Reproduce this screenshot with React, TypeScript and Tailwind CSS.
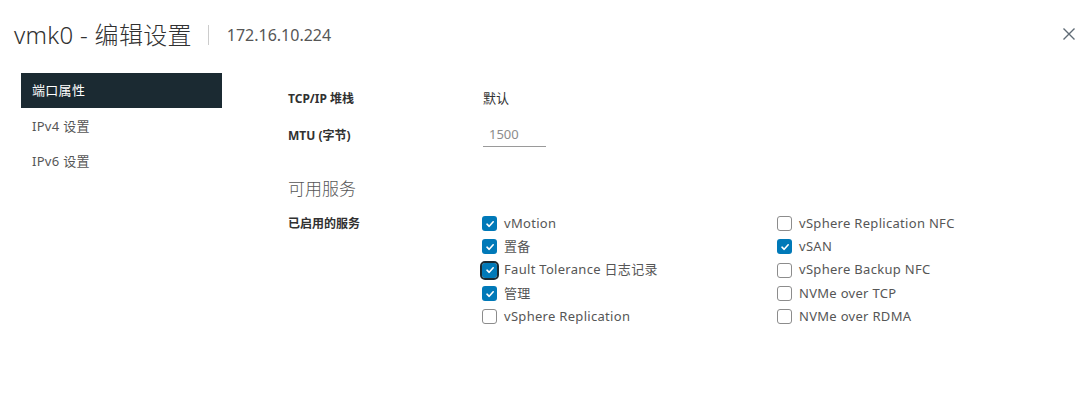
import React from 'react';

type Service = { label: string; checked: boolean; focused?: boolean };

const left: Service[] = [
  { label: 'vMotion', checked: true },
  { label: '置备', checked: true },
  { label: 'Fault Tolerance 日志记录', checked: true, focused: true },
  { label: '管理', checked: true },
  { label: 'vSphere Replication', checked: false },
];

const right: Service[] = [
  { label: 'vSphere Replication NFC', checked: false },
  { label: 'vSAN', checked: true },
  { label: 'vSphere Backup NFC', checked: false },
  { label: 'NVMe over TCP', checked: false },
  { label: 'NVMe over RDMA', checked: false },
];

function Check({ s }: { s: Service }) {
  return (
    <div className="flex items-center h-[23.3px] gap-[7px]">
      <span
        className={
          'relative flex items-center justify-center w-[15px] h-[15px] rounded-[3px] ' +
          (s.checked ? 'bg-[#0079b8] ' : 'bg-white border border-[#8c8c8c] ') +
          (s.focused ? 'outline outline-2 outline-[#1b2a32] outline-offset-[0px]' : '')
        }
      >
        {s.checked && (
          <svg width="10" height="10" viewBox="0 0 10 10" fill="none">
            <path d="M2 5.2 L4.2 7.3 L8.2 2.8" stroke="white" strokeWidth="1.6" strokeLinecap="round" strokeLinejoin="round" />
          </svg>
        )}
      </span>
      <span className="text-[13px] text-[#565656] tracking-[0.3px]">{s.label}</span>
    </div>
  );
}

export default function App() {
  return (
    <div
      className="w-[1080px] h-[406px] bg-white overflow-hidden relative"
      style={{ fontFamily: '"Noto Sans", "Noto Sans CJK SC", sans-serif' }}
    >
      {/* header */}
      <div className="flex items-center h-[50px] pt-[20px] pl-[14px]">
        <h1 className="text-[24px] text-[#313131] font-light leading-none tracking-[0.3px]">vmk0 - 编辑设置</h1>
        <div className="w-px h-[20px] bg-[#cccccc] ml-[16px] mr-[18px]" />
        <span className="text-[16px] text-[#565656] leading-none">172.16.10.224</span>
      </div>
      <button className="absolute right-[1px] top-[24px] w-[20px] h-[20px] flex items-center justify-center text-[#5f6b75]">
        <svg width="14" height="14" viewBox="0 0 14 14" fill="none">
          <path d="M1.5 1.5 L12.5 12.5 M12.5 1.5 L1.5 12.5" stroke="currentColor" strokeWidth="1.4" />
        </svg>
      </button>

      <div className="flex mt-[23px]">
        {/* sidebar */}
        <nav className="w-[201px] ml-[21px] flex flex-col">
          <div className="h-[35px] bg-[#1b2a32] text-white text-[13px] flex items-center pl-[11px] pt-[1px] tracking-[0.3px]">端口属性</div>
          <div className="h-[35px] mt-[1px] text-[#565656] text-[13px] flex items-center pl-[11px] pt-[1px] tracking-[0.3px]">IPv4 设置</div>
          <div className="h-[35px] text-[#565656] text-[13px] flex items-center pl-[11px] pt-[1px] tracking-[0.3px]">IPv6 设置</div>
        </nav>

        {/* content */}
        <div className="ml-[66px] flex flex-col pt-[17px]">
          <div className="flex items-center h-[18px]">
            <span className="w-[195px] text-[12px] font-bold text-[#313131]">TCP/IP 堆栈</span>
            <span className="text-[13px] text-[#313131]">默认</span>
          </div>
          <div className="flex items-center mt-[16px] h-[23px]">
            <span className="w-[195px] text-[12px] font-bold text-[#313131]">MTU (字节)</span>
            <div className="w-[63px] h-[23px] border-b border-[#9a9a9a] flex items-center pl-[6px] text-[13px] text-[#8c8c8c]">1500</div>
          </div>
          <h2 className="mt-[33px] text-[17px] font-light text-[#565656] leading-none">可用服务</h2>
          <div className="flex mt-[15px]">
            <span className="w-[194px] pt-[2px] text-[12px] font-bold text-[#313131] leading-[20px]">已启用的服务</span>
            <div className="w-[295px] flex flex-col">
              {left.map((s) => (
                <Check key={s.label} s={s} />
              ))}
            </div>
            <div className="flex flex-col">
              {right.map((s) => (
                <Check key={s.label} s={s} />
              ))}
            </div>
          </div>
        </div>
      </div>
    </div>
  );
}
